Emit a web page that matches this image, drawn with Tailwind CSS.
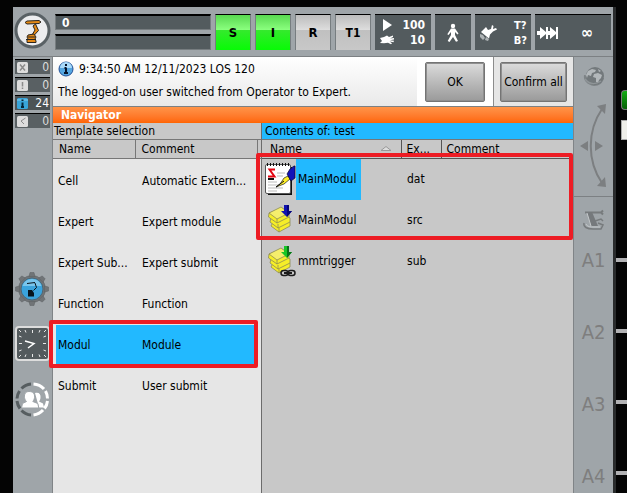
<!DOCTYPE html>
<html lang="en">
<head>
<meta charset="utf-8">
<title>Navigator</title>
<script src="https://cdn.jsdelivr.net/npm/@tailwindcss/browser@4"></script>
</head>
<body class="bg-[#040404] font-['DejaVu_Sans_Condensed','Noto_Sans',sans-serif] text-[12px] leading-4 text-black">
<div class="relative flex h-screen overflow-hidden pt-[7px] pl-[13px]">
  <div class="flex min-w-0 flex-1 flex-col bg-[#9fa5a9]">
    <header class="flex h-[50px] shrink-0 items-start gap-1 border-b border-[#7c8083] pt-[7px] pr-[2px] pl-px font-bold text-white">
      <button aria-label="Main menu" class="-mt-[2px] size-[37px] shrink-0">
        <svg viewBox="0 0 37 37" class="size-[37px]">
          <circle cx="18.500" cy="18.500" r="16.500" fill="#ecedef" stroke="#596165" stroke-width="3"/>
          <path d="m11 10.500 2-1.500 12-.5 2 1.500-2 1.500-12 .5z" fill="#e58a16" stroke="#2b2620"/>
          <path d="m21.500 12 3 6.500-5 5.500-1.500-1 3-5-2-4z" fill="#e58a16" stroke="#2b2620"/>
          <path d="m14 23 6-1 2 3-1 2 1 2v1.500h-9V28l1-1-1-2z" fill="#e58a16" stroke="#2b2620"/>
          <path d="M12 27.500h10M14 25h7" stroke="#2b2620"/>
        </svg>
      </button>
      <div class="flex min-w-0 flex-1 flex-col gap-1">
        <div class="h-4 border border-t-2 border-[#777d80] border-t-black bg-[#535b5e] px-[6px] text-[12px] leading-[14px]">0</div>
        <div class="h-4 border border-t-2 border-[#777d80] border-t-black bg-[#535b5e]"></div>
      </div>
      <button class="h-9 w-9 border-x border-t border-[#777d80] border-t-black bg-[linear-gradient(#58d850,#8aff7e_42%,#35ea2d_43%,#08fb06)] text-[13px] text-black">S</button>
      <button class="h-9 w-9 border-x border-t border-[#777d80] border-t-black bg-[linear-gradient(#58d850,#8aff7e_42%,#35ea2d_43%,#08fb06)] text-[13px] text-black">I</button>
      <button class="h-9 w-9 border-x border-t border-[#777d80] border-t-black bg-[linear-gradient(#bcbcbc,#dddddd_42%,#c0c0c0_43%,#c8c8c8)] text-[13px] text-black">R</button>
      <button class="h-9 w-9 border-x border-t border-[#777d80] border-t-black bg-[linear-gradient(#bcbcbc,#dddddd_42%,#c0c0c0_43%,#c8c8c8)] text-[12px] text-black">T1</button>
      <button aria-label="Program 100, jog 10" class="flex h-9 w-14 items-center justify-between border-t border-black bg-[#535b5e] pr-[6px] pl-1">
        <svg viewBox="0 0 16 34" class="h-[34px] w-4" fill="#fff">
          <path d="m4 3 9 6-9 6z"/>
          <path d="m1 22 4-1 3-1.500 2 1.500 4-1.500v1.500l-3 1.500 4-.5v1.500l-4 .7 4 .6-.5 1.400-4-.6 2.500 1.700-1 1-3-1.500-4 .5L1 27l2-2z"/>
        </svg>
        <span class="text-right text-[12px] leading-[15px]">100<br>10</span>
      </button>
      <button aria-label="Submit interpreter" class="flex h-9 w-9 items-center justify-center border-t border-black bg-[#535b5e]">
        <svg viewBox="0 0 14 20" class="h-5 w-[14px]" fill="#fff">
          <circle cx="7" cy="3" r="2.200"/>
          <path d="M5 5.500h4l3.500 5-1 1L9 9v3l3 6-2 .8L7 14l-3.500 5-1.800-1L5 12V9l-2.500 3-1.200-.8z"/>
        </svg>
      </button>
      <button aria-label="Tool and base" class="flex h-9 w-14 items-center justify-between border-t border-black bg-[#535b5e] px-1">
        <svg viewBox="0 0 18 18" class="size-[18px]">
          <path d="m2 8 5-5 2 3 3-1 1-4 1.500 1-.5 3 3-1 1 1.500-4 2-3 3-1 4z" fill="#fff"/>
          <path d="m1 10 3 1 2 3-2 2-3-3zM7 13l3 2-1 2-3-1z" fill="#aeb3b5"/>
        </svg>
        <span class="text-[11px] leading-[15px]">T?<br>B?</span>
      </button>
      <button aria-label="Incremental jogging off" class="flex h-9 w-19 items-center justify-between border-t border-black bg-[#535b5e] pr-[18px] pl-[2px]">
        <svg viewBox="0 0 22 16" class="h-4 w-[22px]" fill="#fff">
          <path d="M0 6h3V2l6 5V2h2v4h2V2l6 5V2h2v12h-2V9l-6 5v-4h-2v4H9V9l-6 5v-4H0z"/>
        </svg>
        <span class="text-[16px]">∞</span>
      </button>
    </header>

    <div class="flex min-h-0 flex-1">
      <aside class="flex w-10 shrink-0 flex-col border-r border-[#808487] pt-[2px] pl-[2px] text-[12px] text-[#dcdcdc]">
        <div class="mr-[2px] flex flex-col gap-[3px]">
          <button aria-label="Acknowledge messages: 0" class="flex h-[15px] items-center justify-between border-t border-black bg-[#596063] pr-px pl-[2px]">
            <svg viewBox="0 0 11 11" class="size-[11px]"><rect width="11" height="11" rx="1.500" fill="#ddd"/><path d="m3 2.500 5 6M8 2.500l-5 6" stroke="#8b8b8b" stroke-width="1.500"/></svg>
            <span>0</span>
          </button>
          <button aria-label="Status messages: 0" class="flex h-[15px] items-center justify-between border-t border-black bg-[#596063] pr-px pl-[2px]">
            <svg viewBox="0 0 11 11" class="size-[11px]"><rect width="11" height="11" rx="1.500" fill="#ddd"/><path d="M5.500 2v4.500m0 1v1.500" stroke="#8b8b8b" stroke-width="1.500"/></svg>
            <span>0</span>
          </button>
          <button aria-label="Notifications: 24" class="flex h-[15px] items-center justify-between border-t border-black bg-[#4c5356] pr-px pl-[2px] text-white">
            <svg viewBox="0 0 11 11" class="size-[11px]"><rect width="11" height="11" rx="1.500" fill="#38a5da"/><path d="M0 2h11" stroke="#83cdf0"/><path d="M5.500 1.500V3m0 1.500v4M4 9h3" stroke="#03263a" stroke-width="2"/></svg>
            <span>24</span>
          </button>
          <button aria-label="Wait messages: 0" class="flex h-[15px] items-center justify-between border-t border-black bg-[#596063] pr-px pl-[2px]">
            <svg viewBox="0 0 11 11" class="size-[11px]"><rect width="11" height="11" rx="1.500" fill="#ddd"/><path d="M8.500 2 4 5l3 3" fill="none" stroke="#8b8b8b"/></svg>
            <span>0</span>
          </button>
        </div>
        <button aria-label="Configuration" class="mt-[144px] size-[34px]">
          <svg viewBox="0 0 34 34" class="size-[34px]">
            <g fill="#707477" stroke="#5c6063" stroke-width=".5">
              <circle cx="17" cy="17" r="13.500"/>
              <path d="M14 4.500 15 .5h4l1 4zM14 29.500l1 4h4l1-4zM4.500 14l-4 1v4l4 1zM29.500 14l4 1v4l-4 1z"/>
              <path transform="rotate(45 17 17)" d="M14 4.500 15 .5h4l1 4zM14 29.500l1 4h4l1-4zM4.500 14l-4 1v4l4 1zM29.500 14l4 1v4l-4 1z"/>
            </g>
            <circle cx="17" cy="17" r="11" fill="#3aa3dc" stroke="#4f6673"/>
            <path d="M7.500 14a10 10 0 0 1 19 0z" fill="#79c5ec"/>
            <path d="m12 11.500 8-1M20 11l1.500 4.500-3 3" fill="none" stroke="#07141c"/>
            <path d="M13 18h4l2 3v3.500h-6z" fill="#07141c"/>
          </svg>
        </button>
        <button aria-label="Time" class="mt-5 size-[35px]">
          <svg viewBox="0 0 35 35" class="size-[35px]">
            <rect x="1" y="1" width="33" height="33" rx="3" fill="#535a5d" stroke="#ddd" stroke-width="2"/>
            <path d="M17.500 4v3m0 21v3M4 17.500h3m21 0h3M10 4l1 2.500M25 4l-1 2.500M10 31l1-2.500M25 31l-1-2.500M4 10l2.500 1M4 25l2.500-1M31 10l-2.500 1M31 25l-2.500-1M4 4l2 2M31 4l-2 2M4 31l2-2M31 31l-2-2" stroke="#e8e8e8"/>
            <path d="m10 15 9 2.500-6 4.500" fill="none" stroke="#fff" stroke-width="1.500"/>
          </svg>
        </button>
        <button aria-label="User group" class="mt-[21px] size-[35px]">
          <svg viewBox="0 0 35 35" class="size-[35px]">
            <g fill="none" stroke-width="3">
              <path d="M18.500 2A15.500 15.500 0 0 1 29 7M30.500 9a15.500 15.500 0 0 1 2 7.500M32.500 19a15.500 15.500 0 0 1-3 7.500M28 28a15.500 15.500 0 0 1-9.500 5" stroke="#fff"/>
              <path d="M16 2A15.500 15.500 0 0 0 6.500 6.500M4.500 9A15.500 15.500 0 0 0 2 16.500M2 19a15.500 15.500 0 0 0 3 7.500M6.500 28.500A15.500 15.500 0 0 0 16 33" stroke="#565d60"/>
            </g>
            <path d="M20 11c4-1 6 1 5.500 5-.3 2-1 3-1.500 3.500l4 2 1 4h-5z" fill="#fff"/>
            <path d="M14 9.500c4 0 6 2 5.500 6-.2 2-1 3-1.700 4l5 2 1 4.500H6.500l1-4.500 4-2c-1-1-1.700-2-2-4-.5-4 1.500-6 4.500-6z" fill="#fff" stroke="#9fa5a9"/>
          </svg>
        </button>
      </aside>

      <main class="flex min-w-0 flex-1 flex-col">
        <section class="flex h-[50px] shrink-0 border-b border-[#7c8083] bg-[#e6e6e6]">
          <div class="flex min-w-0 flex-1 justify-between border-r border-[#8c8c8c] bg-linear-to-b from-white to-[#e9e9e9]">
            <div class="pl-[5px]">
              <p class="flex items-center gap-[5px] pt-1">
                <svg viewBox="0 0 16 16" class="size-4"><circle cx="8" cy="8" r="7" fill="#55a7e2" stroke="#254f94"/><path d="M2 7a6 6 0 0 1 12 0z" fill="#a9dafa"/><path d="M8 3v2m0 1.500V11M6 12h4M6.500 7H8" stroke="#06152c" stroke-width="2"/></svg>
                <span>9:34:50 AM 12/11/2023 LOS 120</span>
              </p>
              <p class="pt-[7px] whitespace-nowrap">The logged-on user switched from Operator to Expert.</p>
            </div>
            <div class="bg-white px-2 pt-[5px]">
              <button class="h-10 w-15 rounded-xs border border-[#747474] bg-linear-to-b from-[#dcdcdc] to-[#9a9a9a] shadow-[inset_0_0_0_1px_#8f8f8f]">OK</button>
            </div>
          </div>
          <div class="px-[6px] pt-[5px]">
            <button class="h-10 w-[67px] rounded-xs border border-[#747474] bg-linear-to-b from-[#dcdcdc] to-[#9a9a9a] whitespace-nowrap shadow-[inset_0_0_0_1px_#8f8f8f]">Confirm all</button>
          </div>
        </section>
        <h1 class="h-4 shrink-0 bg-linear-to-b from-[#ff9448] to-[#ff6500] pl-2 text-[12px] leading-[17px] font-bold text-white">Navigator</h1>
        <div class="flex min-h-0 flex-1">
          <section class="w-[209px] shrink-0 border-r border-[#6c6c6c] bg-[#e6e6e6]">
            <h2 class="h-[17px] border-b border-[#777] bg-[#c8c8c8] pl-px">Template selection</h2>
            <table class="w-full table-fixed text-left">
              <thead><tr class="h-[17px] bg-[#c8c8c8] leading-[18px]">
                <th class="w-[82px] border-r border-b border-[#777] p-0 pl-[6px] font-normal">Name</th>
                <th class="border-r border-b border-l border-[#777] border-l-white p-0 pl-[6px] font-normal">Comment</th>
                <th class="w-1 border-b border-[#777] p-0"></th>
              </tr></thead>
              <tbody>
                <tr class="h-[2px]"><td colspan="3" class="p-0"></td></tr>
                <tr class="h-[41px]"><td class="p-0 pl-[5px]">Cell</td><td class="p-0 pl-[7px] whitespace-nowrap">Automatic Extern...</td><td></td></tr>
                <tr class="h-[41px]"><td class="p-0 pl-[5px]">Expert</td><td class="p-0 pl-[7px]">Expert module</td><td></td></tr>
                <tr class="h-[41px]"><td class="p-0 pl-[5px] whitespace-nowrap">Expert Sub...</td><td class="p-0 pl-[7px]">Expert submit</td><td></td></tr>
                <tr class="h-[41px]"><td class="p-0 pl-[5px]">Function</td><td class="p-0 pl-[7px]">Function</td><td></td></tr>
                <tr class="h-[41px]" aria-selected="true"><td class="bg-[linear-gradient(90deg,#e6e6e6_3px,#22b9ff_3px)] p-0 pl-[5px]">Modul</td><td class="bg-[#22b9ff] p-0 pl-[7px]">Module</td><td></td></tr>
                <tr class="h-[41px]"><td class="p-0 pl-[5px]">Submit</td><td class="p-0 pl-[7px]">User submit</td><td></td></tr>
              </tbody>
            </table>
          </section>
          <section class="min-w-0 flex-1 bg-[#c8c8c8]">
            <h2 class="h-[17px] border-b border-[#777] bg-[#22b9ff] pl-[3px]">Contents of: test</h2>
            <table class="w-full table-fixed text-left">
              <thead><tr class="h-[18px]">
                <th class="w-[139px] border-r border-b border-[#555] p-0 pl-2 font-normal">
                  <span class="flex items-center justify-between pr-[10px]">Name
                    <svg viewBox="0 0 10 5" class="h-[5px] w-[10px]"><path d="M0 4.500 5 .5l5 4z" fill="#ddd" stroke="#999"/></svg>
                  </span>
                </th>
                <th class="w-10 border-r border-b border-l border-[#555] border-l-white p-0 pl-[5px] font-normal">Ex...</th>
                <th class="border-b border-l border-[#555] border-l-white p-0 pl-[5px] font-normal">Comment</th>
              </tr></thead>
              <tbody>
                <tr class="h-[41px]">
                  <td class="p-0"><div class="flex h-[41px] items-center pl-[3px]">
                    <svg viewBox="0 0 31 34" class="h-[34px] w-[31px] shrink-0">
                      <path d="M25 5h2v28H3v-2z" fill="#111"/>
                      <rect x=".5" y="2.500" width="25" height="29" rx="1.500" fill="#fff" stroke="#555"/>
                      <path d="M2 2.500h23" stroke="#111" stroke-width="3" stroke-dasharray="1 2"/>
                      <path d="M3 20h9m-9 3h11M3 26h15M3 29h9M12 11h8m-8 3h6" stroke="#bbb"/>
                      <path d="M10 7.500H4.500l5 7H3" fill="none" stroke="#e30613" stroke-width="2"/><path d="M3 17h6" stroke="#111" stroke-width="2"/>
                      <path d="m11 25 4-3 4-6 4-2 2 3-6 5z" fill="#ffef26" stroke="#222" stroke-width=".7"/>
                      <path d="m22 12 3-5 4-3h1v12l-4 3z" fill="#1212b8" stroke="#07072f" stroke-width=".7"/><path d="m11 25 8-6" stroke="#111"/>
                    </svg>
                    <span class="flex h-[41px] items-center bg-[#22b9ff] pr-[5px] pl-[2px]">MainModul</span>
                  </div></td>
                  <td class="p-0 pl-[6px]">dat</td><td></td>
                </tr>
                <tr class="h-[41px]">
                  <td class="p-0"><div class="flex items-center gap-[2px] pl-[3px]">
                    <svg viewBox="0 0 31 34" class="h-[34px] w-[31px] shrink-0">
                      <g fill="#f6ee28" stroke="#8d8b55" stroke-width=".8">
                        <path d="m8 19-2 4 8 6 11-6v-4l-7-5z"/>
                        <path d="m6 15-1 4 8 6 12-6v-4l-7-5z"/>
                        <path d="m4 10-.5 4L12 20l12-6v-4l-7-5z"/>
                        <path d="m4 10 12-6 8 6-12 6z" fill="#f5ee6c"/>
                        <path d="M12 16v4M13 21v4M14 25v4" fill="none"/>
                      </g>
                      <path d="M19 2h5v6h3l-5 6-6-6h3z" fill="#1214b0"/><path d="M22 2h2v6h3l-5 6z" fill="#06067a"/>
                    </svg>
                    <span>MainModul</span>
                  </div></td>
                  <td class="p-0 pl-[6px]">src</td><td></td>
                </tr>
                <tr class="h-[41px]">
                  <td class="p-0"><div class="flex items-center gap-[2px] pl-[3px]">
                    <svg viewBox="0 0 31 34" class="h-[34px] w-[31px] shrink-0">
                      <g fill="#f6ee28" stroke="#8d8b55" stroke-width=".8">
                        <path d="m8 19-2 4 8 6 11-6v-4l-7-5z"/>
                        <path d="m6 15-1 4 8 6 12-6v-4l-7-5z"/>
                        <path d="m4 10-.5 4L12 20l12-6v-4l-7-5z"/>
                        <path d="m4 10 12-6 8 6-12 6z" fill="#f5ee6c"/>
                        <path d="M12 16v4M13 21v4M14 25v4" fill="none"/>
                      </g>
                      <path d="M19 2h5v6h3l-5 6-6-6h3z" fill="#18c526"/><path d="M22 2h2v6h3l-5 6z" fill="#087218"/>
                      <g fill="none" stroke="#1a1a1a" stroke-width="1.500"><rect x="16" y="26.500" width="7" height="5" rx="2.500"/><rect x="23" y="26.500" width="7" height="5" rx="2.500"/></g><path d="M19 29h8" stroke="#1a1a1a" stroke-width="2"/>
                    </svg>
                    <span>mmtrigger</span>
                  </div></td>
                  <td class="p-0 pl-[6px]">sub</td><td></td>
                </tr>
              </tbody>
            </table>
          </section>
        </div>
      </main>

      <aside class="flex w-10 shrink-0 flex-col border-l border-[#808487] text-[20px] text-[#7e7e7e]">
        <div class="flex h-[140px] shrink-0 flex-col items-center gap-4 border-b border-[#7c8083] pt-[9px]">
          <svg viewBox="0 0 22 22" class="size-[22px]">
            <path d="M1 9c-1 5 3 10 10 11 5 0 9-3 10-8z" fill="#7d8386"/>
            <circle cx="12" cy="10" r="9" fill="#73797c"/>
            <path d="m5 5 4-2 4 1-1 2-3 1-1 3-3-1-1 3-1-3zM11 8l4-1 4 2-1 3-2 2-1 3-2-1v-4l-3-1zM15 3l3 2-2 1z" fill="#b3b8bb"/>
            <path d="M2 13c4 5 10 6 16 2" fill="none" stroke="#8f9598" stroke-width="1.500"/>
          </svg>
          <svg viewBox="0 0 30 84" class="h-[84px] w-[30px]" fill="#7c7f81">
            <path d="M23 5C8 27 8 57 23 79" fill="none" stroke="#7c7f81" stroke-width="2"/>
            <path d="m18 2 9-2-1 10zM18 82l9 1-1-10zM1 42l8-5v10zM24 42l-8-5v10z"/>
          </svg>
        </div>
        <svg viewBox="0 0 24 22" class="mx-auto mt-3 h-[22px] w-6" fill="none">
          <path d="M3 3.500h16l2-2M19 3.500l2 2" stroke="#777b7d" stroke-width="2"/>
          <path d="m5 4 5-1 6 14H9z" fill="#75797c"/>
          <path d="m5 4 4 13" stroke="#c4c8ca"/>
          <path d="m13 12 6-2 2 2M2 14c-1 4 3 6 9 6h8l2-4-5-2" stroke="#777b7d" stroke-width="1.500"/>
          <path d="M4 15c1 3 5 3 8 3h6" stroke="#c4c8ca"/>
        </svg>
        <div class="mt-[17px] text-center leading-6">
          <div class="h-[72px]">A1</div>
          <div class="h-[72px]">A2</div>
          <div class="h-[72px]">A3</div>
          <div>A4</div>
        </div>
      </aside>
    </div>
  </div>
  <div class="w-[3px] shrink-0 bg-[#292b2c]"></div>
  <div class="flex w-[11px] shrink-0 flex-col items-end pt-[83px]">
    <div class="h-5 w-[6px] shrink-0 rounded-l-sm border border-r-0 border-[#777] bg-linear-to-b from-[#14ac14] to-[#075f07]"></div>
    <div class="mt-[10px] h-5 w-[6px] shrink-0 border border-r-0 border-[#aaa] bg-[#eeeee9]"></div>
    <div class="mt-[118px] flex w-full flex-col gap-[67px]">
      <div class="h-1 bg-[#b1b1b3]"></div>
      <div class="h-1 bg-[#b1b1b3]"></div>
      <div class="h-1 bg-[#b1b1b3]"></div>
      <div class="h-1 bg-[#b1b1b3]"></div>
    </div>
  </div>

  <!-- Highlight frames over the selected entries -->
  <div class="pointer-events-none absolute top-[320px] left-[49px] h-12 w-[209px] rounded-xs border-4 border-[#ed1c24]"></div>
  <div class="pointer-events-none absolute top-[153px] left-[256px] h-[87px] w-[317px] rounded-xs border-4 border-[#ed1c24]"></div>
</div>
</body>
</html>
